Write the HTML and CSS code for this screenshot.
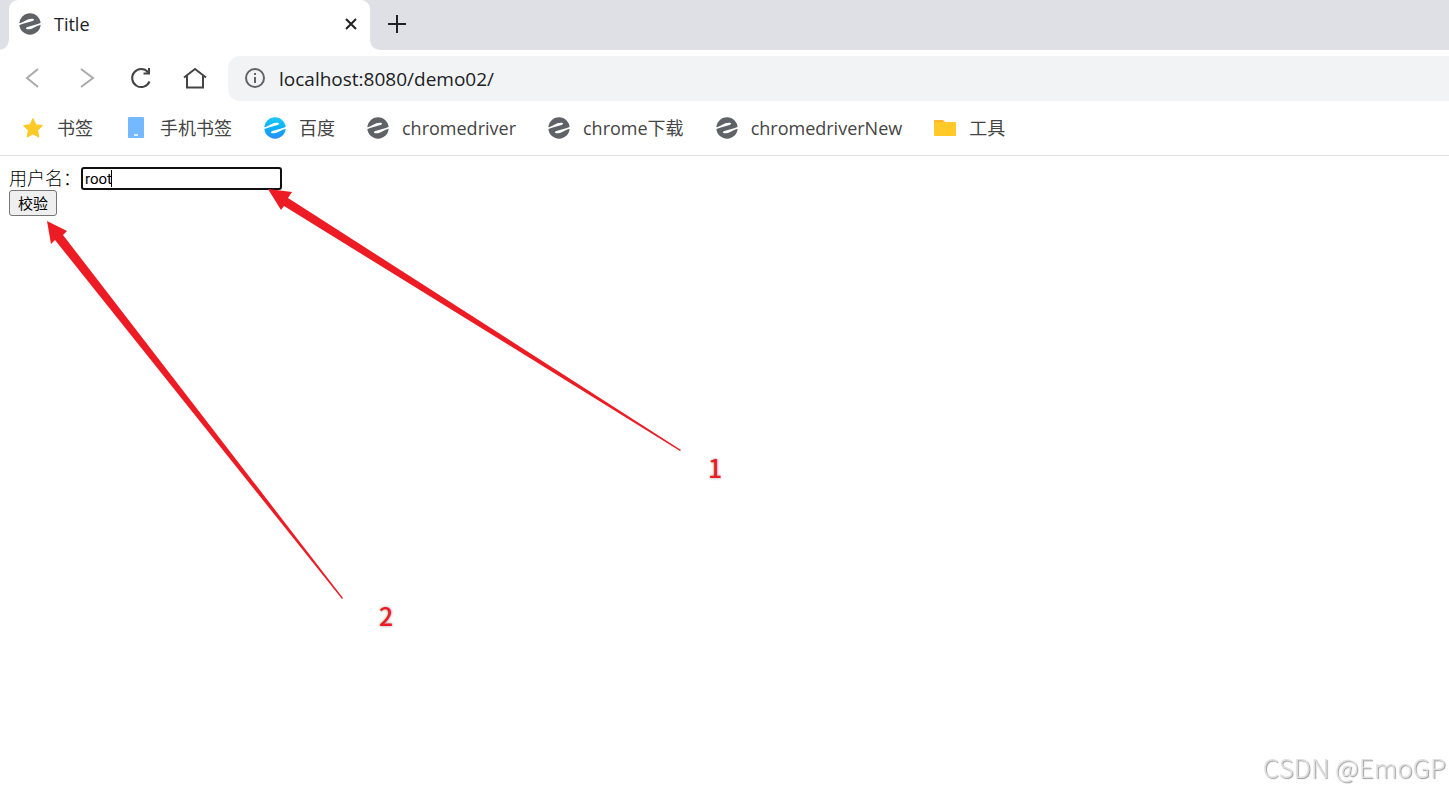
FILE: index.html
```html
<!DOCTYPE html>
<html lang="zh-CN">
<head>
    <meta charset="UTF-8">
    <meta name="viewport" content="width=device-width, initial-scale=1.0">
    <title>Title</title>
    <link rel="stylesheet" href="styles.css">
</head>
<body>
    <!-- shared site logo -->
    <svg class="sprite" aria-hidden="true">
        <defs>
            <linearGradient id="blue" x1="0" y1="0" x2="0" y2="1">
                <stop offset="0" stop-color="#20c8fa"/>
                <stop offset="0.5" stop-color="#08b0fa"/>
                <stop offset="1" stop-color="#2b8df8"/>
            </linearGradient>
        </defs>
        <symbol id="logo" viewBox="0 0 22 22">
            <circle cx="11" cy="11" r="10.700"/>
            <path fill="#fff" d="M0 10.300C5 9.600 7.500 5.700 13 5.700c2.600 0 2.600 1.500.6 2.300C9 9.600 4 10.200 0 12.300zM22 11.700c-5 .7-7.500 4.600-13 4.600-2.600 0-2.600-1.500-.6-2.300C13 12.400 18 11.800 22 9.700z"/>
        </symbol>
    </svg>

    <header class="browser">
        <div class="tabs">
            <div class="tab">
                <svg class="logo"><use href="#logo"/></svg>
                <span class="tab-title">Title</span>
                <button class="close" aria-label="关闭">
                    <svg width="12" height="12" viewBox="0 0 12 12"><path d="M1 1l10 10M11 1L1 11"/></svg>
                </button>
            </div>
            <button class="new-tab" aria-label="新标签页">
                <svg width="18" height="18" viewBox="0 0 18 18"><path d="M9 0v18M0 9h18"/></svg>
            </button>
        </div>

        <div class="toolbar">
            <button class="nav dim" aria-label="后退">
                <svg width="24" height="24" viewBox="0 0 24 24"><path d="M17 3L6 12l11 9"/></svg>
            </button>
            <button class="nav dim" aria-label="前进">
                <svg width="24" height="24" viewBox="0 0 24 24"><path d="M6 3l12 9-12 9"/></svg>
            </button>
            <button class="nav" aria-label="刷新">
                <svg width="24" height="24" viewBox="0 0 24 24"><path d="M20.500 15.500A9 9 0 1 1 19 6.200M20 2v5.500h-5.500"/></svg>
            </button>
            <button class="nav" aria-label="主页">
                <svg width="24" height="24" viewBox="0 0 24 24"><path d="M1 11.500L12 3l11 8.500M4 10v11.500h16V10"/></svg>
            </button>
            <div class="address">
                <svg width="20" height="20" viewBox="0 0 20 20"><circle cx="10" cy="10" r="9"/><path d="M10 9v6M10 5v2"/></svg>
                <input type="text" aria-label="地址" value="localhost:8080/demo02/">
            </div>
        </div>

        <nav class="bookmarks">
            <a href="#">
                <svg class="icon" viewBox="0 0 22 22"><path fill="#ffc928" stroke="#ffc928" stroke-linejoin="round" d="M11 1.500l2.900 6.300 6.600.8-4.900 4.700 1.300 6.900-5.900-3.300-5.900 3.300 1.300-6.900L1.500 8.600l6.600-.8z"/></svg>
                <span>书签</span>
            </a>
            <a href="#">
                <svg class="icon" viewBox="0 0 22 22"><rect x="3" y="0" width="16" height="21" rx="1" fill="#74b9ff"/><path stroke="#fff" stroke-width="1.500" d="M9 18h4"/></svg>
                <span>手机书签</span>
            </a>
            <a href="#">
                <svg class="logo blue"><use href="#logo"/></svg>
                <span>百度</span>
            </a>
            <a href="#">
                <svg class="logo"><use href="#logo"/></svg>
                <span>chromedriver</span>
            </a>
            <a href="#">
                <svg class="logo"><use href="#logo"/></svg>
                <span>chrome下载</span>
            </a>
            <a href="#">
                <svg class="logo"><use href="#logo"/></svg>
                <span>chromedriverNew</span>
            </a>
            <a href="#">
                <svg class="icon" viewBox="0 0 22 22"><path fill="#ffb52e" d="M0 3h9l2 2v3H0z"/><rect x="0" y="5" width="22" height="14" rx="1" fill="#ffc928"/></svg>
                <span>工具</span>
            </a>
        </nav>
    </header>

    <main class="page">
        <form>
            <div class="row">
                <label for="username">用户名：</label>
                <input type="text" id="username" value="root">
            </div>
            <button type="button" id="check">校验</button>
        </form>

        <svg class="arrows" width="700" height="460" viewBox="0 0 700 460">
            <path d="M268 33l24 3-4 6 393 252-1 1L284 50l-3 4z"/>
            <path d="M47 65l20 10-4 4 280 363-1 1L55 84l-4 4z"/>
        </svg>
        <span class="note note-1">1</span>
        <span class="note note-2">2</span>
    </main>

    <div class="watermark">CSDN @EmoGP</div>
</body>
</html>
```

FILE: styles.css
```css
*{
    box-sizing: border-box;
}
body{
    margin: 0;
    min-height: 100vh;
    background-color: white;
    font-family: "Open Sans", "Noto Sans CJK SC", sans-serif;
}
button{
    padding: 0;
    border: none;
    background: none;
}
.sprite{
    position: absolute;
    width: 0;
    height: 0;
}
.logo, .icon{
    width: 22px;
    height: 22px;
    flex: none;
    fill: #5f6368;
}
.logo.blue{
    fill: url(#blue);
}
.browser{
    border-bottom: 1px solid #dfe1e5;
}
.tabs{
    display: flex;
    height: 50px;
    padding-left: 9px;
    background-color: #dfe0e6;
}
.tab{
    position: relative;
    display: flex;
    align-items: center;
    width: 361px;
    padding: 0 13px 2px 10px;
    border-radius: 9px 9px 0 0;
    background-color: white;
}
/* curved feet of the active tab */
.tab::before, .tab::after{
    content: "";
    position: absolute;
    bottom: 0;
    width: 9px;
    height: 9px;
}
.tab::before{
    left: -9px;
    background: radial-gradient(circle at 0 0, transparent 8px, white 9px);
}
.tab::after{
    right: -9px;
    background: radial-gradient(circle at 100% 0, transparent 8px, white 9px);
}
.tab-title{
    flex: 1;
    margin-left: 13px;
    font-size: 18px;
    color: #202124;
}
.close, .new-tab{
    display: flex;
    align-items: center;
    stroke: #202124;
    stroke-width: 2;
}
.new-tab{
    margin-left: 18px;
    padding-bottom: 2px;
}
.toolbar{
    display: flex;
    align-items: center;
    height: 56px;
    padding-left: 21px;
}
.nav{
    display: flex;
    width: 24px;
    margin-right: 30px;
    fill: none;
    stroke: #444;
    stroke-width: 2;
}
.nav.dim{
    stroke: #aaa;
}
.address{
    display: flex;
    flex: 1;
    align-items: center;
    height: 45px;
    margin-left: -9px;
    padding-left: 17px;
    border-radius: 12px 0 0 12px;
    background-color: #f1f3f4;
    fill: none;
    stroke: #5f6368;
    stroke-width: 2;
}
.address input{
    flex: 1;
    margin-left: 14px;
    padding: 2px 0 0;
    border: none;
    outline: none;
    background: none;
    font-family: "Open Sans", sans-serif;
    font-size: 19px;
    color: #202124;
}
.bookmarks{
    display: flex;
    gap: 32px;
    height: 49px;
    padding-left: 22px;
}
.bookmarks a{
    display: flex;
    align-items: center;
    gap: 13px;
    height: 44px;
    font-size: 18px;
    line-height: 24px;
    white-space: nowrap;
    color: #444;
    text-decoration: none;
}
.page{
    position: relative;
    padding: 11px 9px;
}
.row{
    display: flex;
    align-items: center;
    height: 23px;
}
.row label{
    width: 72px;
    font-size: 18px;
    font-weight: 300;
    line-height: 23px;
    white-space: nowrap;
    color: black;
}
#username{
    width: 201px;
    height: 23px;
    padding: 0 2px;
    border: 2px solid #101010;
    border-radius: 3px;
    outline: none;
    /* text caret */
    background: linear-gradient(black, black) 28px 1px / 1px 17px no-repeat white;
    font-family: Roboto, sans-serif;
    font-size: 15px;
}
#check{
    display: block;
    width: 48px;
    height: 26px;
    border: 1px solid #767676;
    border-radius: 3px;
    background-color: #efefef;
    font-family: "Noto Sans CJK SC", sans-serif;
    font-size: 15px;
    line-height: 20px;
}
/* hand-drawn marks over the page */
.arrows{
    position: absolute;
    top: 0;
    left: 0;
    fill: #ed1c24;
    pointer-events: none;
}
.note{
    position: absolute;
    font-family: "Noto Sans CJK SC", sans-serif;
    font-size: 25px;
    font-weight: 500;
    line-height: 28px;
    color: #ed1c24;
    text-shadow: 0 0 3px #999;
}
.note-1{
    top: 297px;
    left: 708px;
}
.note-2{
    top: 445px;
    left: 379px;
}
.watermark{
    position: fixed;
    right: 3px;
    bottom: 12px;
    font-family: "Noto Sans CJK SC", sans-serif;
    font-size: 26px;
    font-weight: 300;
    line-height: 32px;
    color: #e0e0e0;
    text-shadow: 1px 1px 1px #999;
}
```
